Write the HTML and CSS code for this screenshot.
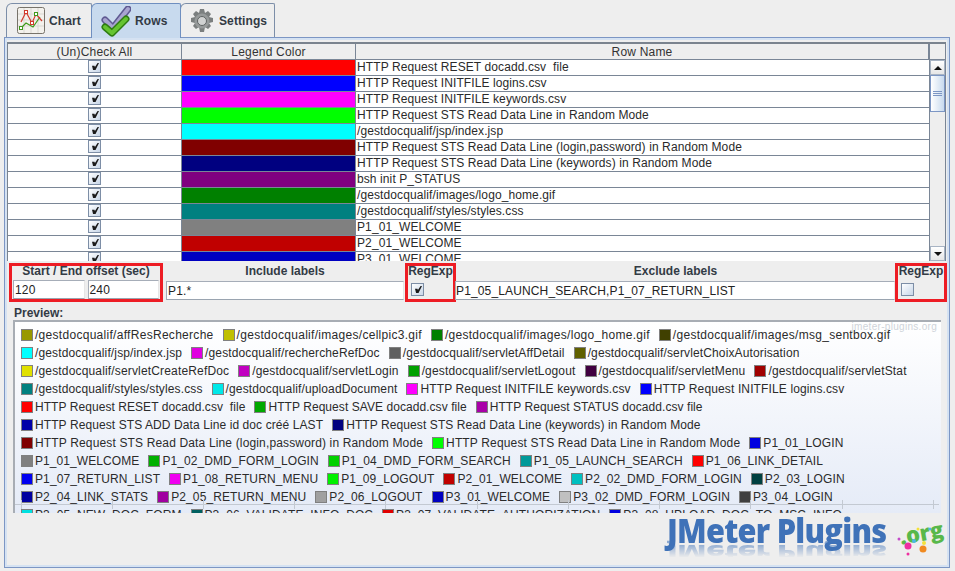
FILE: index.html
```html
<!DOCTYPE html>
<html lang="en">
<head>
<meta charset="utf-8">
<title>JMeter Plugins</title>
<link rel="stylesheet" href="styles.css">
</head>
<body>
<div class="app">
  <div class="tabs">
    <div class="tab tab-chart">
      <svg class="icon" width="28" height="27" viewBox="0 0 28 27"><rect x="0.5" y="0.5" width="27" height="26" rx="2" fill="#f3f1ec" stroke="#77736a"/><path d="M1 7h26M1 13h26M1 19h26M7 1v25M14 1v25M21 1v25" stroke="#d9d7d2"/><path d="M4 21l5-5 7 4 7-10" fill="none" stroke="#3f9a1c" stroke-width="1.2"/><path d="M4 15l5-10 6 11 4-9 6 7" fill="none" stroke="#d23a2c" stroke-width="1.2"/><rect x="7.500" y="3.500" width="3" height="3" fill="#fff" stroke="#d23a2c"/><rect x="13.500" y="14.500" width="3" height="3" fill="#fff" stroke="#d23a2c"/><rect x="17.500" y="5.500" width="3" height="3" fill="#fff" stroke="#3f9a1c"/><rect x="2.500" y="19.500" width="3" height="3" fill="#fff" stroke="#3f9a1c"/></svg>
      <span>Chart</span>
    </div>
    <div class="tab tab-active tab-rows">
      <svg class="icon" width="30" height="31" viewBox="0 0 30 31"><path d="M4 14l8 8L27 3" fill="none" stroke="#5f5a92" stroke-width="7" stroke-linecap="round" stroke-linejoin="round"/><path d="M4 14l8 8L27 3" fill="none" stroke="#a8a4d0" stroke-width="4" stroke-linecap="round" stroke-linejoin="round"/><path d="M4 21l7 6 14-14" fill="none" stroke="#2f7d12" stroke-width="7" stroke-linecap="round" stroke-linejoin="round"/><path d="M4 21l7 6 14-14" fill="none" stroke="#66c431" stroke-width="4" stroke-linecap="round" stroke-linejoin="round"/></svg>
      <span>Rows</span>
    </div>
    <div class="tab tab-settings">
      <svg class="icon" width="24" height="24" viewBox="0 0 24 24"><path d="M10 0h4l1 4 3-2 3 3-2 3 4 1v4l-4 1 2 3-3 3-3-2-1 5h-4l-1-5-3 2-3-3 2-3-4-1v-4l4-1-2-3 3-3 3 2z" fill="#7b7f7f"/><circle cx="12" cy="12" r="7.500" fill="#969a9a"/><circle cx="12" cy="12" r="4.500" fill="#d0d2d2" stroke="#5f6363"/></svg>
      <span>Settings</span>
    </div>
  </div>
  <div class="panel">
    <div class="table-pane">
      <div class="table-clip">
        <table class="rows">
          <colgroup><col class="c1"><col class="c2"><col></colgroup>
          <thead>
            <tr><th>(Un)Check All</th><th>Legend Color</th><th>Row Name</th></tr>
          </thead>
          <tbody>
            <tr><td><span class="check on"></span></td><td class="color" style="background:#ff0000"></td><td class="name">HTTP Request RESET docadd.csv&nbsp; file</td></tr>
            <tr><td><span class="check on"></span></td><td class="color" style="background:#0000ff"></td><td class="name">HTTP Request INITFILE logins.csv</td></tr>
            <tr><td><span class="check on"></span></td><td class="color" style="background:#ff00ff"></td><td class="name">HTTP Request INITFILE keywords.csv</td></tr>
            <tr><td><span class="check on"></span></td><td class="color" style="background:#00ff00"></td><td class="name">HTTP Request STS Read Data Line in Random Mode</td></tr>
            <tr><td><span class="check on"></span></td><td class="color" style="background:#00ffff"></td><td class="name">/gestdocqualif/jsp/index.jsp</td></tr>
            <tr><td><span class="check on"></span></td><td class="color" style="background:#800000"></td><td class="name">HTTP Request STS Read Data Line (login,password) in Random Mode</td></tr>
            <tr><td><span class="check on"></span></td><td class="color" style="background:#000080"></td><td class="name">HTTP Request STS Read Data Line (keywords) in Random Mode</td></tr>
            <tr><td><span class="check on"></span></td><td class="color" style="background:#800080"></td><td class="name">bsh init P_STATUS</td></tr>
            <tr><td><span class="check on"></span></td><td class="color" style="background:#008000"></td><td class="name">/gestdocqualif/images/logo_home.gif</td></tr>
            <tr><td><span class="check on"></span></td><td class="color" style="background:#008080"></td><td class="name">/gestdocqualif/styles/styles.css</td></tr>
            <tr><td><span class="check on"></span></td><td class="color" style="background:#808080"></td><td class="name">P1_01_WELCOME</td></tr>
            <tr><td><span class="check on"></span></td><td class="color" style="background:#c00000"></td><td class="name">P2_01_WELCOME</td></tr>
            <tr><td><span class="check on"></span></td><td class="color" style="background:#0000c0"></td><td class="name">P3_01_WELCOME</td></tr>
          </tbody>
        </table>
      </div>
      <div class="scrollbar">
        <div class="scroll-head"></div>
        <div class="scroll-btn"><span class="arrow up"></span></div>
        <div class="scroll-thumb"><span class="grip"></span></div>
        <div class="scroll-track"></div>
        <div class="scroll-btn"><span class="arrow down"></span></div>
      </div>
    </div>
    <div class="filters">
      <div class="field marked offset">
        <div class="field-title">Start / End offset (sec)</div>
        <div class="field-inputs"><span class="input">120</span><span class="input">240</span></div>
      </div>
      <div class="field include">
        <div class="field-title">Include labels</div>
        <div class="field-inputs"><span class="input">P1.*</span></div>
      </div>
      <div class="field marked regexp">
        <div class="field-title">RegExp</div>
        <div class="field-check"><span class="check on"></span></div>
      </div>
      <div class="field exclude">
        <div class="field-title">Exclude labels</div>
        <div class="field-inputs"><span class="input">P1_05_LAUNCH_SEARCH,P1_07_RETURN_LIST</span></div>
      </div>
      <div class="field marked regexp regexp-end">
        <div class="field-title">RegExp</div>
        <div class="field-check"><span class="check"></span></div>
      </div>
    </div>
    <div class="preview-title">Preview:</div>
    <div class="preview">
      <div class="legend">
        <div class="lrow"><span class="item"><i style="background:#999900"></i>/gestdocqualif/affResRecherche</span><span class="item"><i style="background:#c0c000"></i>/gestdocqualif/images/cellpic3.gif</span><span class="item"><i style="background:#008000"></i>/gestdocqualif/images/logo_home.gif</span><span class="item"><i style="background:#404000"></i>/gestdocqualif/images/msg_sentbox.gif</span></div>
        <div class="lrow"><span class="item"><i style="background:#00ffff"></i>/gestdocqualif/jsp/index.jsp</span><span class="item"><i style="background:#e000e0"></i>/gestdocqualif/rechercheRefDoc</span><span class="item"><i style="background:#606060"></i>/gestdocqualif/servletAffDetail</span><span class="item"><i style="background:#606000"></i>/gestdocqualif/servletChoixAutorisation</span></div>
        <div class="lrow"><span class="item"><i style="background:#e0e000"></i>/gestdocqualif/servletCreateRefDoc</span><span class="item"><i style="background:#c000c0"></i>/gestdocqualif/servletLogin</span><span class="item"><i style="background:#00a000"></i>/gestdocqualif/servletLogout</span><span class="item"><i style="background:#400040"></i>/gestdocqualif/servletMenu</span><span class="item"><i style="background:#a00000"></i>/gestdocqualif/servletStat</span></div>
        <div class="lrow"><span class="item"><i style="background:#008080"></i>/gestdocqualif/styles/styles.css</span><span class="item"><i style="background:#00e8e8"></i>/gestdocqualif/uploadDocument</span><span class="item"><i style="background:#ff00ff"></i>HTTP Request INITFILE keywords.csv</span><span class="item"><i style="background:#0000ff"></i>HTTP Request INITFILE logins.csv</span></div>
        <div class="lrow"><span class="item"><i style="background:#ff0000"></i>HTTP Request RESET docadd.csv&nbsp; file</span><span class="item"><i style="background:#00a800"></i>HTTP Request SAVE docadd.csv file</span><span class="item"><i style="background:#a800a8"></i>HTTP Request STATUS docadd.csv file</span></div>
        <div class="lrow"><span class="item"><i style="background:#0000a8"></i>HTTP Request STS ADD Data Line id doc créé LAST</span><span class="item"><i style="background:#000080"></i>HTTP Request STS Read Data Line (keywords) in Random Mode</span></div>
        <div class="lrow"><span class="item"><i style="background:#800000"></i>HTTP Request STS Read Data Line (login,password) in Random Mode</span><span class="item"><i style="background:#00ff00"></i>HTTP Request STS Read Data Line in Random Mode</span><span class="item"><i style="background:#0000e0"></i>P1_01_LOGIN</span></div>
        <div class="lrow"><span class="item"><i style="background:#808080"></i>P1_01_WELCOME</span><span class="item"><i style="background:#00b000"></i>P1_02_DMD_FORM_LOGIN</span><span class="item"><i style="background:#00d000"></i>P1_04_DMD_FORM_SEARCH</span><span class="item"><i style="background:#009999"></i>P1_05_LAUNCH_SEARCH</span><span class="item"><i style="background:#ff0000"></i>P1_06_LINK_DETAIL</span></div>
        <div class="lrow"><span class="item"><i style="background:#0000f0"></i>P1_07_RETURN_LIST</span><span class="item"><i style="background:#f000f0"></i>P1_08_RETURN_MENU</span><span class="item"><i style="background:#00f000"></i>P1_09_LOGOUT</span><span class="item"><i style="background:#c00000"></i>P2_01_WELCOME</span><span class="item"><i style="background:#00c0c0"></i>P2_02_DMD_FORM_LOGIN</span><span class="item"><i style="background:#004040"></i>P2_03_LOGIN</span></div>
        <div class="lrow"><span class="item"><i style="background:#0000a0"></i>P2_04_LINK_STATS</span><span class="item"><i style="background:#a000a0"></i>P2_05_RETURN_MENU</span><span class="item"><i style="background:#a0a0a0"></i>P2_06_LOGOUT</span><span class="item"><i style="background:#0000c0"></i>P3_01_WELCOME</span><span class="item"><i style="background:#c0c0c0"></i>P3_02_DMD_FORM_LOGIN</span><span class="item"><i style="background:#404040"></i>P3_04_LOGIN</span></div>
        <div class="lrow"><span class="item"><i style="background:#00e0e0"></i>P3_05_NEW_DOC_FORM</span><span class="item"><i style="background:#006060"></i>P3_06_VALIDATE_INFO_DOC</span><span class="item"><i style="background:#e00000"></i>P3_07_VALIDATE_AUTHORIZATION</span><span class="item"><i style="background:#0000e0"></i>P3_08_UPLOAD_DOC_TO_MSC_INFO</span></div>
      </div>
      <svg class="ticks" width="926" height="10" viewBox="0 0 926 10"><path d="M0 4.500h926M8.500 0v9M99.500 0v9M190.500 0v9M281.500 0v9M372.500 0v9M464.500 0v9M555.500 0v9M646.500 0v9M737.500 0v9M829.500 0v9M920.500 0v9" fill="none" stroke="#c3c9d2"/></svg>
    </div>
    <div class="watermark">jmeter-plugins.org</div>
    <div class="logo">
      <div class="logo-text">JMeter Plugins</div>
      <div class="logo-org">.org</div>
      <svg class="logo-dots" width="42" height="30" viewBox="0 0 42 30"><circle cx="14" cy="19" r="3.500" fill="#ee2fa0"/><circle cx="29" cy="22" r="3.500" fill="#f08a20"/><circle cx="20" cy="14" r="2" fill="#4cb8e8"/><circle cx="30" cy="16" r="2" fill="#f4e23a"/><circle cx="5" cy="12" r="1.500" fill="#c44cc8"/><circle cx="36" cy="2" r="1.500" fill="#4cb8e8"/><circle cx="24" cy="2" r="1.500" fill="#f4e23a"/><circle cx="14" cy="27" r="1.500" fill="#ee2fa0"/></svg>
    </div>
  </div>
</div>
</body>
</html>
```
FILE: styles.css
```css
* { box-sizing: border-box; }
html, body { margin: 0; padding: 0; }
body { width: 955px; height: 571px; overflow: hidden; background: #eeeeee; font-family: "Liberation Sans", Arial, sans-serif; font-size: 12px; color: #222; }
.app { width: 955px; height: 571px; padding: 3px 5px 3px 4px; display: flex; flex-direction: column; }

.tabs { display: flex; height: 34px; padding-left: 2px; flex: none; }
.tab { display: flex; align-items: center; height: 34px; border: 1px solid #7c8ea8; border-bottom: 0; border-radius: 6px 2px 0 0; background: #eeeeee; font-weight: bold; color: #333b45; font-size: 12px; letter-spacing: 0.1px; margin-left: -1px; }
.tab-chart { width: 86px; padding-left: 10px; margin-left: 0; gap: 4px; }
.tab-rows { width: 90px; height: 35px; padding-left: 9px; gap: 4px; background: #c8daee; border-color: #6f8fc0; position: relative; z-index: 1; }
.tab-settings { width: 95px; padding-left: 9px; gap: 5px; }
.icon { flex: none; display: block; }

.panel { flex: 1; position: relative; border: 1px solid #7c96c4; background: #eeeeee; padding: 4px 2px 3px 2px; box-shadow: inset 0 0 0 2px #d5e2f2; min-height: 0; }

.table-pane { display: flex; height: 219px; border-top: 2px solid #7a838e; border-left: 1px solid #7a838e; margin-right: 1px; background: #eee; }
.table-clip { width: 921px; height: 217px; overflow: hidden; background: #fff; flex: none; }
.rows { width: 921px; border-collapse: separate; border-spacing: 0; table-layout: fixed; color: #2a2a2a; }
.c1 { width: 174px; }
.c2 { width: 174px; }
.rows th { height: 16px; padding: 0; font-weight: normal; font-size: 12px; letter-spacing: 0.2px; text-align: center; background: #eeeeee; color: #333; border-bottom: 1px solid #7a8696; border-right: 1px solid #7a8696; line-height: 14px; }
.rows td { height: 16px; padding: 0; border-bottom: 1px solid #7a8696; text-align: center; line-height: 15px; }
.rows td:first-child { border-right: 1px solid #7a8696; }
.rows td.color { border-right: 1px solid #7a8696; }
.rows td.name { text-align: left; padding-left: 1px; letter-spacing: 0.1px; white-space: nowrap; overflow: hidden; }

.check { display: inline-block; position: relative; width: 13px; height: 13px; border: 1px solid #7d8ea6; background: linear-gradient(135deg, #fff, #c8d6e8); vertical-align: -2px; }
.check.on::after { content: ""; position: absolute; left: 3px; top: 2px; width: 7px; height: 7px; background: #1b1b1b; clip-path: polygon(0 40%, 35% 40%, 42% 58%, 80% 0, 100% 0, 50% 100%, 15% 100%); }

.scrollbar { width: 17px; flex: none; display: flex; flex-direction: column; background: #eeeeee; border-left: 1px solid #7a8696; border-right: 1px solid #7a8696; }
.scroll-head { height: 16px; flex: none; border-bottom: 1px solid #7a8696; }
.scroll-btn { height: 15px; flex: none; display: flex; align-items: center; justify-content: center; background: linear-gradient(#fff, #e6e6e6); border: 1px solid #a8b4c4; }
.arrow { width: 0; height: 0; border-left: 4px solid transparent; border-right: 4px solid transparent; }
.arrow.up { border-bottom: 4px solid #111; }
.arrow.down { border-top: 4px solid #111; }
.scroll-thumb { height: 37px; flex: none; display: flex; align-items: center; justify-content: center; border: 1px solid #7c96c4; background: linear-gradient(90deg, #fff, #c8daee); }
.grip { width: 9px; height: 5px; border-top: 1px solid #7c96c4; border-bottom: 1px solid #7c96c4; position: relative; }
.grip::after { content: ""; position: absolute; left: 0; right: 0; top: 1px; height: 1px; background: #7c96c4; }
.scroll-track { flex: 1; background: #eeeeee; }

.filters { display: flex; height: 39px; margin-top: 2px; padding-left: 2px; }
.field { display: flex; flex-direction: column; flex: none; padding-top: 3px; }
.field-title { height: 15px; line-height: 11px; font-weight: bold; text-align: center; color: #333b45; white-space: nowrap; }
.field-inputs { display: flex; gap: 3px; height: 19px; }
.input { flex: 1; display: block; height: 19px; line-height: 18px; padding-left: 1px; background: #fff; border: 1px solid #a6adb8; border-right-color: #e6e6e6; border-bottom-color: #9aa4b0; color: #222; letter-spacing: 0.14px; font-size: 12px; white-space: nowrap; overflow: hidden; }
.marked { border: 3px solid #ed1c24; padding: 0; }
.offset { width: 154px; }
.offset .field-inputs { padding: 0 1px; }
.include { width: 238px; margin-left: 3px; }
.regexp { width: 51px; margin-left: 1px; }
.field-check { padding: 2px 0 0 3px; }
.exclude { width: 439px; }
.exclude .input { padding-left: 0; margin-left: -1px; }
.regexp-end { width: 52px; margin-left: 0; }

.preview-title { padding: 4px 0 0 7px; line-height: 14px; font-weight: bold; color: #333b45; }
.preview { position: relative; margin-left: 6px; width: 928px; height: 193px; border-top: 2px solid #a8adb4; border-left: 2px solid #a8adb4; background: linear-gradient(#ffffff, #e5ebf7); overflow: hidden; }
.legend { padding: 4px 0 0 6px; }
.lrow { display: flex; height: 18px; align-items: center; white-space: nowrap; }
.item { display: flex; align-items: center; margin-right: 9px; color: #2b2b2b; letter-spacing: 0.1px; }
.item i { display: block; flex: none; width: 12px; height: 12px; border: 1px solid #808080; margin-right: 2px; }
.lrow:nth-child(1) .item { letter-spacing: 0.29px; }
.lrow:nth-child(2) .item { letter-spacing: 0.13px; }
.lrow:nth-child(3) .item { letter-spacing: 0.16px; }
.lrow:nth-child(4) .item { letter-spacing: 0.13px; }
.lrow:nth-child(5) .item { letter-spacing: 0.06px; }
.lrow:nth-child(6) .item { letter-spacing: 0.09px; }
.lrow:nth-child(7) .item { letter-spacing: 0.15px; }
.lrow:nth-child(8) .item { letter-spacing: 0.08px; }
.ticks { position: absolute; left: -2px; bottom: 3px; }

.watermark { position: absolute; right: 12px; top: 283px; color: #cfd4da; font-size: 10px; letter-spacing: 0.3px; white-space: nowrap; }
.logo { position: absolute; left: 662px; top: 476px; width: 280px; height: 52px; }
.logo-text { position: absolute; left: 0; top: -2px; font-family: "Open Sans", sans-serif; font-weight: 800; font-size: 33px; line-height: 38px; white-space: nowrap; letter-spacing: -0.8px; transform: scaleX(0.93); transform-origin: left top; color: #3f72b8; }
.logo-text::after { content: "JMeter Plugins"; position: absolute; left: 0; top: 0; transform-origin: 0 32px; transform: scaleY(-0.6); -webkit-mask-image: linear-gradient(transparent 25%, rgba(0, 0, 0, 0.55) 85%); mask-image: linear-gradient(transparent 25%, rgba(0, 0, 0, 0.55) 85%); }
.logo-org { position: absolute; left: 232px; top: 6px; font-family: "Open Sans", sans-serif; font-weight: 800; font-size: 22px; line-height: 24px; color: #58b84a; transform: rotate(-10deg); }
.logo-dots { position: absolute; left: 227px; top: 13px; }
```
